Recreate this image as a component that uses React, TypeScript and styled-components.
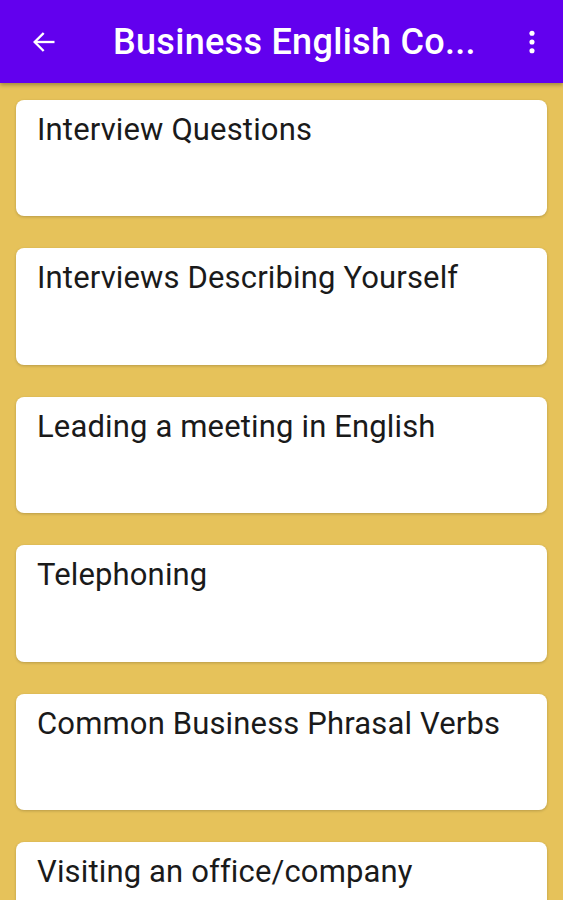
import React from 'react';
import styled, { createGlobalStyle } from 'styled-components';

const GlobalStyle = createGlobalStyle`
  body {
    margin: 0;
    background: #e6c25a;
    font-family: Roboto, "Noto Sans", sans-serif;
  }
`;

const Page = styled.div`
  width: 563px;
  height: 900px;
  overflow: hidden;
  background: #e6c25a;
`;

const AppBar = styled.header`
  height: 83px;
  background: #6200ee;
  display: flex;
  align-items: center;
  padding: 0 14px 0 27px;
  box-shadow: 0 2px 4px rgba(0, 0, 0, 0.3);
  position: relative;
  z-index: 1;
  color: #fff;
`;

const IconButton = styled.button<{ $push?: boolean }>`
  background: none;
  border: none;
  padding: 0;
  color: #fff;
  display: flex;
  align-items: center;
  justify-content: center;
  width: 34px;
  height: 34px;
  margin-left: ${(p) => (p.$push ? 'auto' : '0')};
`;

const Title = styled.h1`
  margin: 0 0 0 52px;
  font-size: 36px;
  font-weight: 500;
  letter-spacing: 0.3px;
  white-space: nowrap;
`;

const List = styled.main`
  display: flex;
  flex-direction: column;
  gap: 32px;
  padding: 17px 16px 0;
`;

const Card = styled.div`
  height: 116.4px;
  background: #fff;
  border-radius: 8px;
  box-shadow: 0 1px 3px rgba(0, 0, 0, 0.2);
  padding: 12px 21px;
  box-sizing: border-box;
  flex-shrink: 0;
`;

const CardTitle = styled.div`
  font-size: 31px;
  color: #1a1a1a;
  line-height: 36px;
  letter-spacing: 0.15px;
`;

const topics = [
  'Interview Questions',
  'Interviews Describing Yourself',
  'Leading a meeting in English',
  'Telephoning',
  'Common Business Phrasal Verbs',
  'Visiting an office/company',
];

const App: React.FC = () => {
  return (
    <Page>
      <GlobalStyle />
      <AppBar>
        <IconButton aria-label="back">
          <svg width="28" height="28" viewBox="0 0 24 24" fill="none" stroke="#fff" strokeWidth="2" strokeLinecap="square">
            <path d="M20 12H5" />
            <path d="M11 5l-7 7 7 7" />
          </svg>
        </IconButton>
        <Title>Business English Co...</Title>
        <IconButton aria-label="more" $push>
          <svg width="28" height="28" viewBox="0 0 24 24" fill="#fff">
            <circle cx="12" cy="4.5" r="2.2" />
            <circle cx="12" cy="12" r="2.2" />
            <circle cx="12" cy="19.5" r="2.2" />
          </svg>
        </IconButton>
      </AppBar>
      <List>
        {topics.map((t) => (
          <Card key={t}>
            <CardTitle>{t}</CardTitle>
          </Card>
        ))}
      </List>
    </Page>
  );
};

export default App;
